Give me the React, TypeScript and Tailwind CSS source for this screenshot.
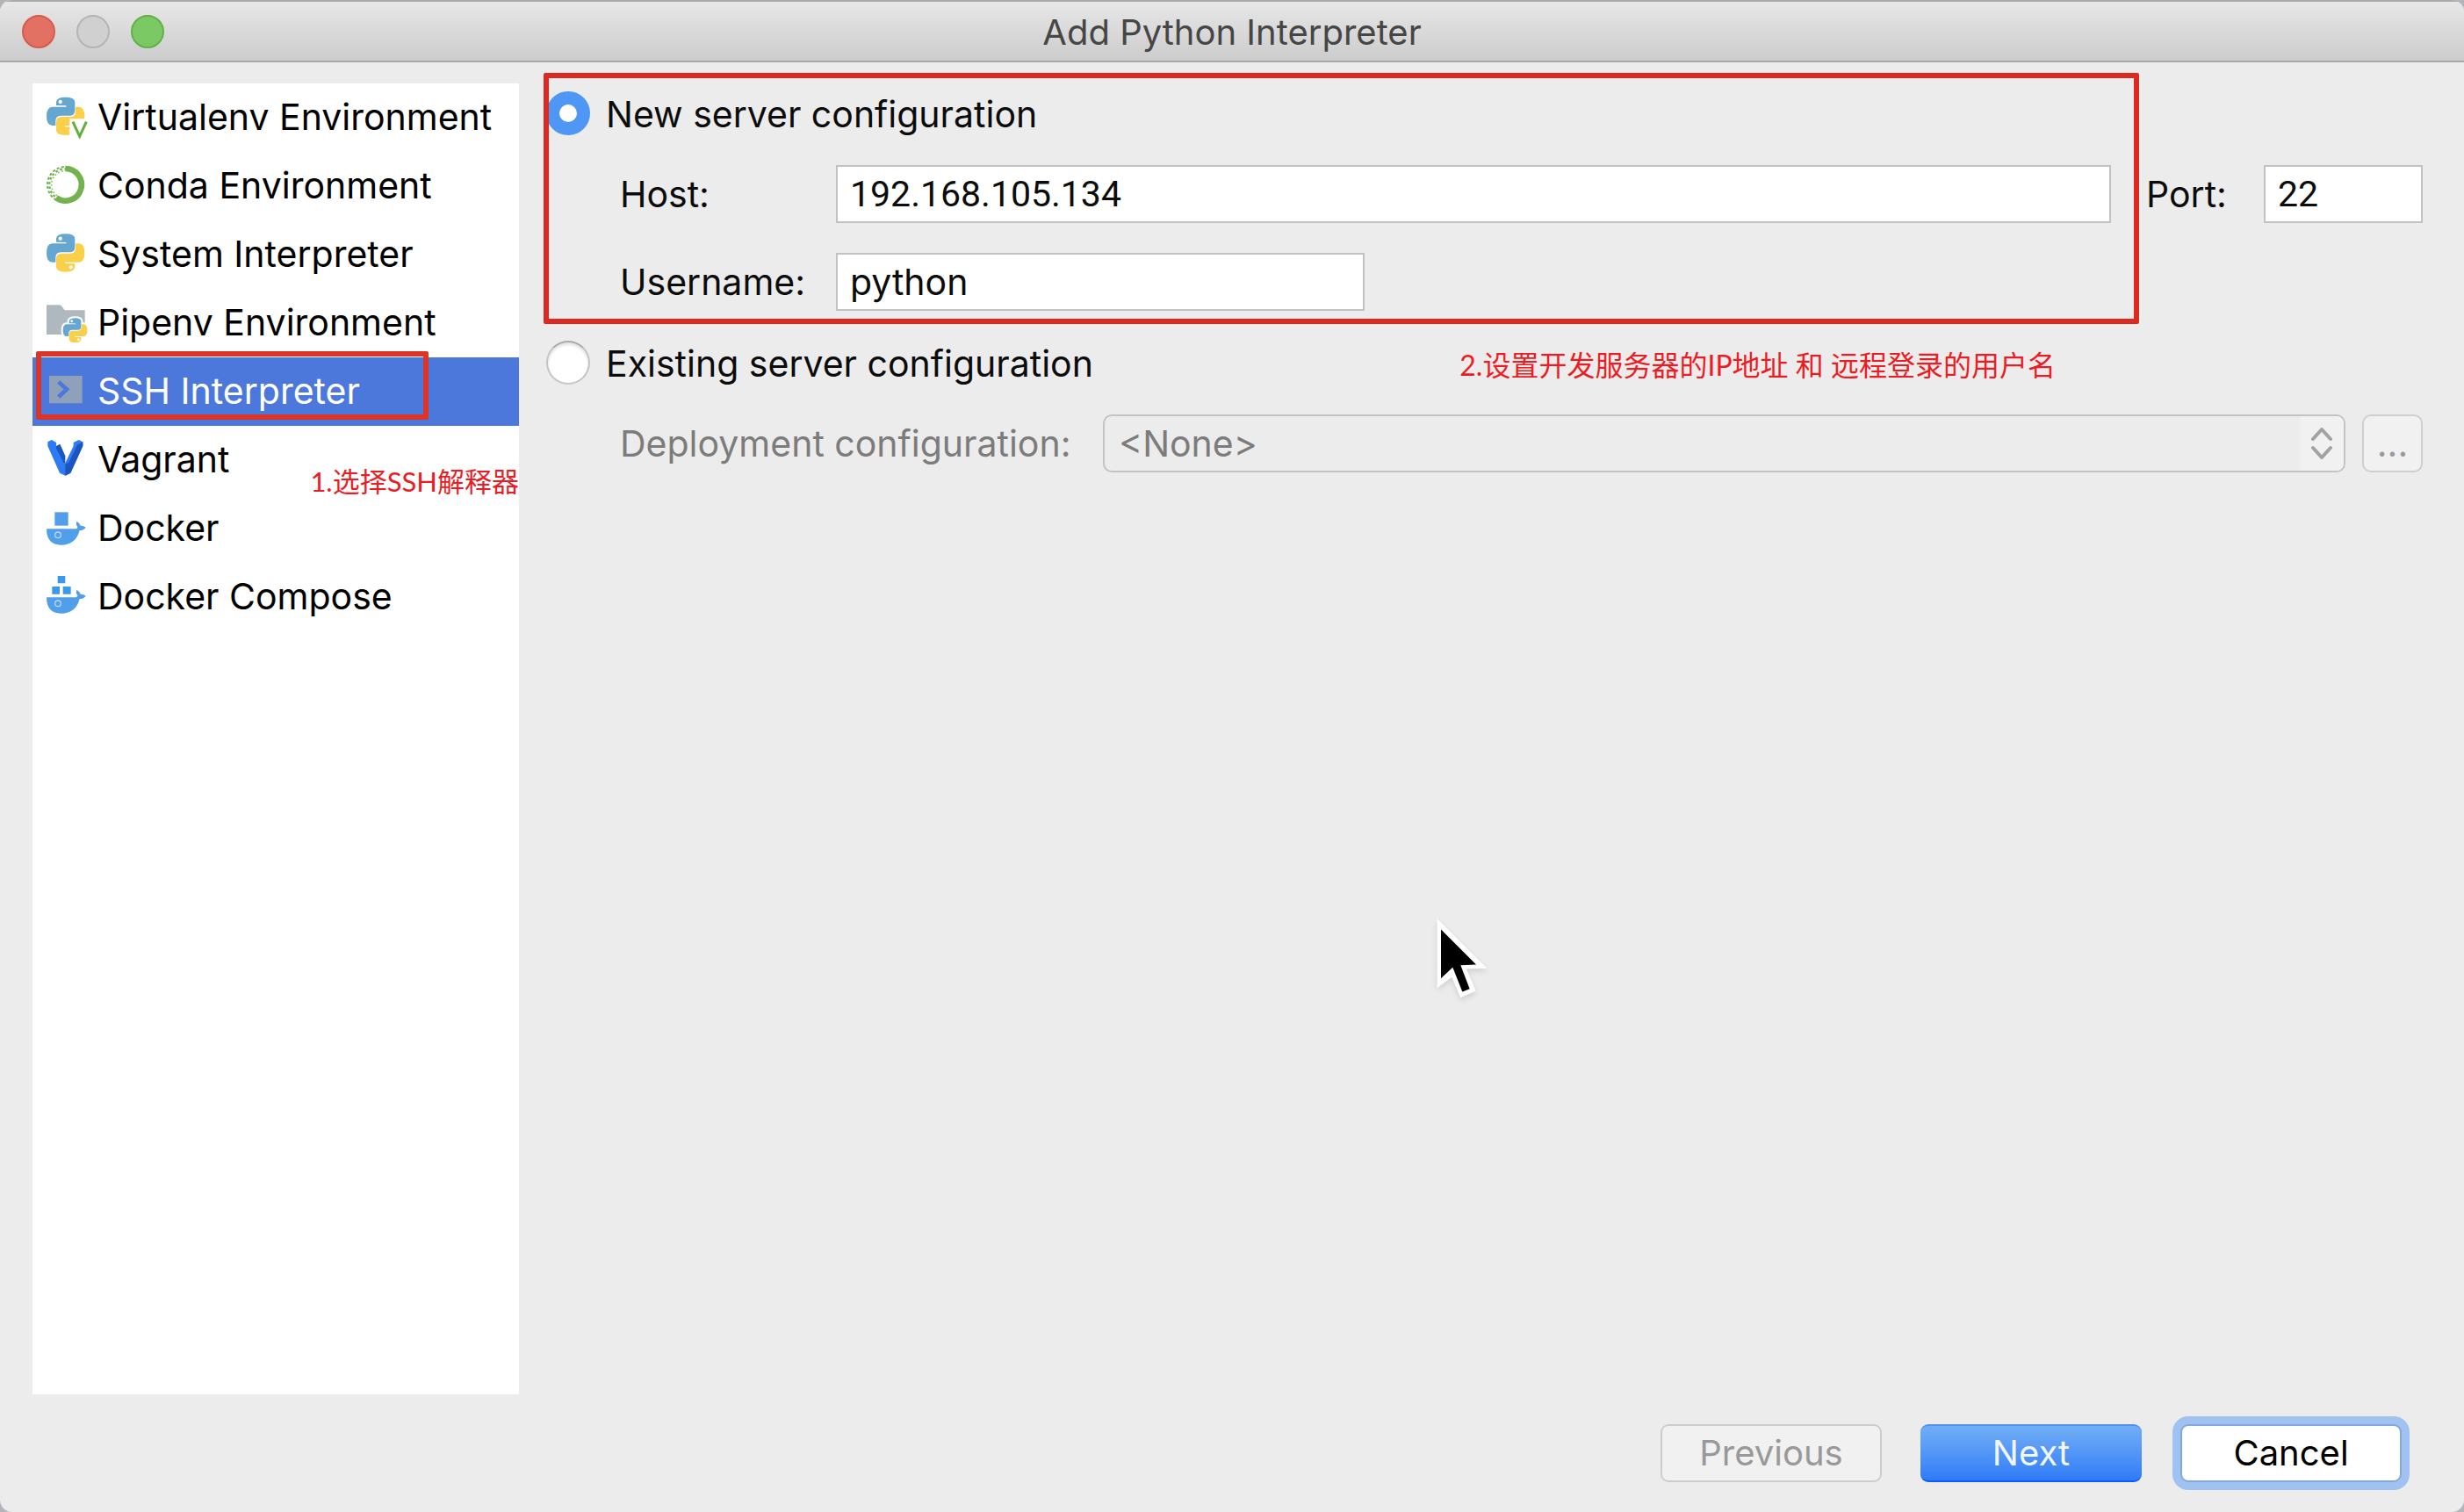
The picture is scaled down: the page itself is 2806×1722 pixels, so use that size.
import type { ReactNode } from "react";

const snake =
  "M33 28 V17 Q33 0 65 0 Q97 0 97 17 V45 Q97 63 79 63 H50 Q31 63 31 82 V97 H20 Q0 97 0 65 Q0 33 20 33 H67 V29 Z";

function PythonShape() {
  return (
    <g>
      <path d={snake} fill="#66a7d1" />
      <circle cx="47" cy="16" r="6.500" fill="#fff" />
      <g transform="rotate(180 65 65)">
        <path d={snake} fill="#fad04b" />
        <circle cx="47" cy="16" r="6.500" fill="#fff" />
      </g>
    </g>
  );
}

function Icon({ children }: { children: ReactNode }) {
  return (
    <svg viewBox="0 0 144 144" className="size-12 shrink-0" aria-hidden="true">
      {children}
    </svg>
  );
}

const VirtualenvIcon = () => (
  <Icon>
    <g transform="translate(0 2)">
      <PythonShape />
    </g>
    <path d="M79 76 H144 V144 H79 Z" fill="#fff" />
    <path d="M90 86 L113 136 L136 86" fill="none" stroke="#62b03c" strokeWidth="9" />
  </Icon>
);

const CondaIcon = () => (
  <Icon>
    <g fill="none" stroke="#74b250">
      <path d="M64 12 A55 55 0 1 1 33 112" strokeWidth="20" />
      <circle cx="64" cy="67" r="61" strokeWidth="6" strokeDasharray="9 7" pathLength="383" clipPath="url(#conda-left)" />
      <circle cx="64" cy="67" r="54" strokeWidth="7" strokeDasharray="8 8" pathLength="340" strokeDashoffset="5" clipPath="url(#conda-left)" />
      <circle cx="64" cy="67" r="47" strokeWidth="5" strokeDasharray="4 9" pathLength="295" clipPath="url(#conda-left)" />
    </g>
    <clipPath id="conda-left">
      <path d="M0 0 H66 V30 L36 60 V144 H0 Z" />
    </clipPath>
  </Icon>
);

const SystemIcon = () => (
  <Icon>
    <g transform="translate(0 1)">
      <PythonShape />
    </g>
  </Icon>
);

const PipenvIcon = () => (
  <Icon>
    <path d="M0 10 H42 Q50 10 54 17 L62 28 H131 V111 H0 Z" fill="#afb7bf" />
    <g transform="translate(56 55) scale(.64)">
      <g fill="#fff" stroke="#fff" strokeWidth="20" strokeLinejoin="round">
        <path d={snake} />
        <path d={snake} transform="rotate(180 65 65)" />
      </g>
      <PythonShape />
    </g>
  </Icon>
);

const SshIcon = () => (
  <Icon>
    <path d="M9 18 H122 V112 H9 Z" fill="#8fa0ba" />
    <path d="M41 39 L69 64 L41 90" fill="none" stroke="#4d78db" strokeWidth="14" />
  </Icon>
);

const VagrantIcon = () => (
  <Icon>
    <path d="M4 10 L18 3 L33 12 V24 L63 84 L92 24 V12 L110 3 L124 10 V24 L82 116 L64 125 L45 116 L4 24 Z" fill="#2e7bf6" />
    <path d="M124 10 V24 L82 116 L64 125 V86 L76 80 L105 20 Z" fill="#1d55c0" />
    <path d="M33 24 L46 17 L64 58 V84 L58 80 L33 32 Z" fill="#1d55c0" />
  </Icon>
);

const Whale = () => (
  <g>
    <path
      d="M0 73 H101 Q106 71 106 66 Q99 58 103 47 Q114 53 116 62 Q126 61 134 68 Q127 78 113 78 Q100 128 50 128 Q0 128 0 73 Z"
      fill="#519fea"
    />
    <circle cx="39" cy="94" r="10" fill="none" stroke="#b5d7f7" strokeWidth="4" />
  </g>
);

const DockerIcon = () => (
  <Icon>
    <path d="M28 16 H74 V62 H28 Z" fill="#519fea" />
    <Whale />
  </Icon>
);

const ComposeIcon = () => (
  <Icon>
    <path d="M38 0 H64 V25 H38 Z M19 36 H45 V62 H19 Z M56 36 H83 V62 H56 Z" fill="#3d98e9" />
    <Whale />
  </Icon>
);

const environments = [
  { name: "Virtualenv Environment", icon: <VirtualenvIcon /> },
  { name: "Conda Environment", icon: <CondaIcon /> },
  { name: "System Interpreter", icon: <SystemIcon /> },
  { name: "Pipenv Environment", icon: <PipenvIcon /> },
  { name: "SSH Interpreter", icon: <SshIcon />, selected: true },
  { name: "Vagrant", icon: <VagrantIcon /> },
  { name: "Docker", icon: <DockerIcon /> },
  { name: "Docker Compose", icon: <ComposeIcon /> },
];

const field = "h-[66px] min-w-0 border-2 border-[#c2c2c2] bg-white px-3.5 outline-none";

function TitleBar() {
  return (
    <header className="grid h-[71px] grid-cols-[1fr_auto_1fr] items-center border-t-2 border-b-2 border-t-[#a9a9a9] border-b-[#a8a8a8] bg-linear-to-b from-[#e7e7e7] to-[#cccccc] px-[25px]">
      <div className="flex gap-6">
        <button aria-label="Close" className="size-[38px] rounded-full border-2 border-[#d9594c] bg-[#e27163]" />
        <button aria-label="Minimize" className="size-[38px] rounded-full border-2 border-[#b4b4b4] bg-[#d0d0d0]" />
        <button aria-label="Zoom" className="size-[38px] rounded-full border-2 border-[#5fb148] bg-[#7bc964]" />
      </div>
      <h1 className="pt-0.5 text-[40px] leading-none text-[#464646]">Add Python Interpreter</h1>
    </header>
  );
}

function Sidebar() {
  return (
    <nav aria-label="Environment type" className="relative w-[554px] shrink-0 bg-white">
      <ul>
        {environments.map((env) => (
          <li key={env.name}>
            <button
              aria-current={env.selected ? "true" : undefined}
              className={
                env.selected
                  ? "flex h-[78px] w-full items-center gap-2.5 bg-[#4d78db] pl-4 text-white"
                  : "flex h-[78px] w-full items-center gap-2.5 pl-4 text-black"
              }
            >
              {env.icon}
              <span className="pb-0.5 whitespace-nowrap">{env.name}</span>
            </button>
          </li>
        ))}
      </ul>
      <div className="pointer-events-none absolute top-[305px] left-1 h-[78px] w-[447px] rounded-xs border-6 border-[#dc3426]" />
      <p className="absolute top-[433px] right-0 font-[Lato,'Noto_Sans_CJK_SC',sans-serif] text-[31px] leading-10 whitespace-nowrap text-[#ec1c24]">
        1.选择SSH解释器
      </p>
    </nav>
  );
}

function ServerForm() {
  return (
    <main className="relative flex flex-1 flex-col gap-[34px] pt-[9px] pr-[47px] pl-[31px]">
      <label className="flex h-[50px] items-center gap-[18px]">
        <input type="radio" name="server" defaultChecked className="size-[50px] appearance-none rounded-full border-[15px] border-[#4f97f4] bg-white" />
        <span className="pt-0.5">New server configuration</span>
      </label>
      <div className="flex items-center pl-[84px]">
        <label htmlFor="host" className="w-[246px] shrink-0">Host:</label>
        <input id="host" defaultValue="192.168.105.134" className={`flex-1 font-[Roboto,sans-serif] ${field}`} />
        <label htmlFor="port" className="ml-10 w-[134px] shrink-0">Port:</label>
        <input id="port" defaultValue="22" className={`w-[181px] font-[Roboto,sans-serif] ${field}`} />
      </div>
      <div className="flex items-center pl-[84px]">
        <label htmlFor="username" className="w-[246px] shrink-0">Username:</label>
        <input id="username" defaultValue="python" className={`w-[602px] ${field}`} />
      </div>
      <div className="flex h-[50px] items-center justify-between">
        <label className="flex items-center gap-[18px]">
          <input type="radio" name="server" className="size-[50px] appearance-none rounded-full border-2 border-t-[#a8a8a8] border-r-[#c4c4c4] border-b-[#c8c8c8] border-l-[#c4c4c4] bg-white shadow-[inset_0_3px_3px_#e4e4e4]" />
          <span className="pt-0.5">Existing server configuration</span>
        </label>
        <p className="mr-[418px] pt-1.5 font-[Lato,'Noto_Sans_CJK_SC',sans-serif] text-[32px] leading-10 whitespace-nowrap text-[#ec1c24]">
          2.设置开发服务器的IP地址 和 远程登录的用户名
        </p>
      </div>
      <div className="flex items-center pl-[84px] text-[#7c7c7c]">
        <label htmlFor="deployment" className="w-[550px] shrink-0">Deployment configuration:</label>
        <div className="relative flex-1">
          <select id="deployment" disabled className="block h-[66px] w-full appearance-none rounded-[10px] border-2 border-[#c3c3c3] bg-[#ececec] pl-4 opacity-100">
            <option>&lt;None&gt;</option>
          </select>
          <span className="pointer-events-none absolute inset-y-0.5 right-0.5 flex w-[50px] items-center justify-center rounded-r-lg bg-[#f1f1f1]">
            <svg viewBox="0 0 28 40" className="h-10 w-7" fill="none" stroke="#a2a2a2" strokeWidth="4" strokeLinecap="round" strokeLinejoin="round" aria-hidden="true">
              <path d="M4 15 L14 4 L24 15 M4 25 L14 36 L24 25" />
            </svg>
          </span>
        </div>
        <button disabled aria-label="Browse deployments" className="ml-[19px] h-[66px] w-[69px] rounded-[10px] border-2 border-[#cfcfcf] bg-[#f1f1f1] text-[#9a9a9a]">
          ...
        </button>
      </div>
      <div className="pointer-events-none absolute top-[-12px] right-[370px] left-[28px] h-[286px] rounded-xs border-6 border-[#dc2a20]" />
    </main>
  );
}

function Footer() {
  const base = "h-[66px] w-[252px] rounded-[9px]";
  return (
    <footer className="flex justify-end gap-11 py-[34px] pr-[71px] text-[40px]">
      <button disabled className={`${base} border-2 border-[#cdcdcd] bg-[#f1f1f1] text-[#999999]`}>Previous</button>
      <button className={`${base} border-t-2 border-b-2 border-t-[#4f93ee] border-b-[#0d5cf5] bg-linear-to-b from-[#72aef6] to-[#2f7bf6] text-[#f2f5fb]`}>Next</button>
      <button className={`${base} border-2 border-[#82a8dc] bg-white text-black ring-9 ring-[#a0c2f0]`}>Cancel</button>
    </footer>
  );
}

function Cursor() {
  return (
    <svg viewBox="90 60 210 320" className="pointer-events-none absolute top-[1040px] left-[1630px] h-[107px] w-[70px] drop-shadow-md" aria-hidden="true">
      <path d="M110 78 L280 248 L210 250 L242 325 L190 348 L160 278 L110 315 Z" fill="#fff" />
      <path d="M123 115 L243 235 L190 237 L221 318 L196 328 L163 245 L123 282 Z" fill="#000" />
    </svg>
  );
}

export default function App() {
  return (
    <div className="min-h-screen bg-[#b3b5b8] font-[Inter,sans-serif] text-[41px] leading-[50px] text-[#0c0c0c]">
      <div className="relative flex min-h-screen flex-col overflow-hidden rounded-[14px] bg-[#ececec]">
        <TitleBar />
        <div className="flex flex-1 pt-6 pl-[37px]">
          <Sidebar />
          <ServerForm />
        </div>
        <Footer />
        <Cursor />
      </div>
    </div>
  );
}
